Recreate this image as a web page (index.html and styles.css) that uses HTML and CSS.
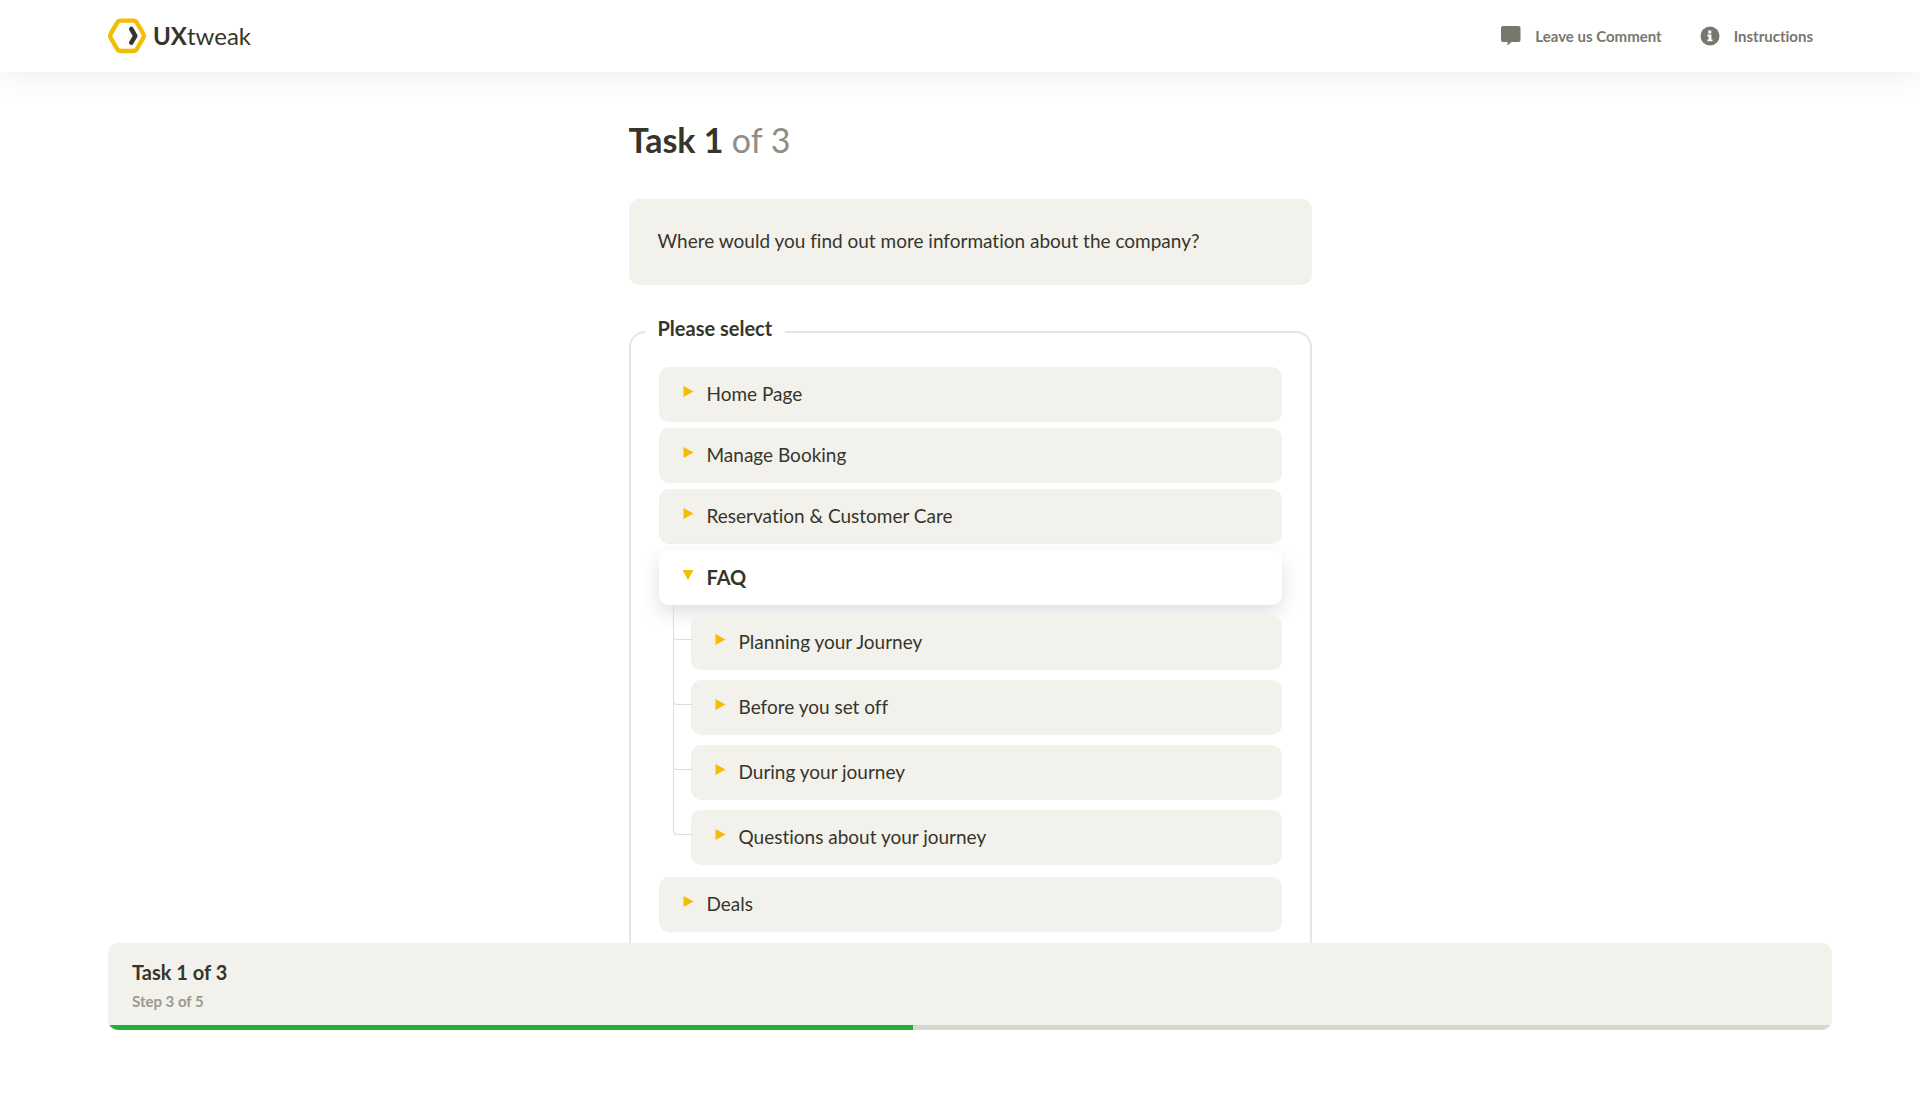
FILE: index.html
```html
<!DOCTYPE html>
<html lang="en">
  <head>
    <meta charset="UTF-8" />
    <meta name="viewport" content="width=device-width, initial-scale=1.0" />
    <title>Task 1 of 3 - UXtweak</title>

    <link rel="stylesheet" href="styles.css">
  </head>
  <body>
    <header class="header">
      <a class="logo" href="#">
        <svg width="38" height="36" viewBox="0 0 38 36" fill="none" stroke-linejoin="round" stroke-linecap="round">
          <path stroke="#f2bd05" stroke-width="4.4" d="M13 2.6h12q2.6 0 3.9 2.2l6 10.2q1.7 2.8 0 5.6l-6 10.2q-1.3 2.2-3.9 2.2H13q-2.6 0-3.9-2.2l-6-10.2q-1.7-2.8 0-5.6l6-10.2q1.3-2.2 3.9-2.2z" />
          <path stroke="#35362b" stroke-width="4.6" d="M23.3 11l4 6.8-4 6.8" />
        </svg>
        <span class="logo-text"><b>UX</b>tweak</span>
      </a>
      <nav class="nav">
        <a href="#">
          <svg width="20" height="20" viewBox="0 0 20 20" fill="currentColor">
            <path d="M2 0h15.5a2 2 0 0 1 2 2v12a2 2 0 0 1-2 2h-7L6.500 19.500V16H2a2 2 0 0 1-2-2V2a2 2 0 0 1 2-2z" />
          </svg>
          Leave us Comment
        </a>
        <a href="#">
          <svg width="20" height="20" viewBox="0 0 20 20">
            <circle cx="10" cy="10" r="9.5" fill="currentColor" />
            <path fill="#fff" d="M8.3 4.500h3v3h-3zM7.400 8.600h4v4.800h1.200v1.800H7.400v-1.800h1.200v-3H7.400z" />
          </svg>
          Instructions
        </a>
      </nav>
    </header>

    <main class="main">
      <div class="task">
        <h1>Task 1 <span>of 3</span></h1>
        <p class="question">Where would you find out more information about the company?</p>

        <fieldset class="select">
          <legend>Please select</legend>
          <ul class="tree">
            <li><button type="button" class="node">Home Page</button></li>
            <li><button type="button" class="node">Manage Booking</button></li>
            <li><button type="button" class="node">Reservation &amp; Customer Care</button></li>
            <li>
              <button type="button" class="node open" aria-expanded="true">FAQ</button>
              <ul class="subtree">
                <li><button type="button" class="node">Planning your Journey</button></li>
                <li><button type="button" class="node">Before you set off</button></li>
                <li><button type="button" class="node">During your journey</button></li>
                <li><button type="button" class="node">Questions about your journey</button></li>
              </ul>
            </li>
            <li><button type="button" class="node">Deals</button></li>
          </ul>
        </fieldset>
      </div>
    </main>

    <footer class="footer">
      <div class="status">
        <div class="status-text">
          <strong>Task 1 of 3</strong>
          <small>Step 3 of 5</small>
        </div>
        <div class="progress">
          <div class="progress-bar" style="width: 46.7%"></div>
        </div>
      </div>
    </footer>
  </body>
</html>
```
FILE: styles.css
```css
* {
  box-sizing: border-box;
}

body {
  display: flex;
  flex-direction: column;
  height: 100vh;
  margin: 0;
  color: #35362b;
  background: #fff;
  font-family: Lato, sans-serif;
  font-size: 20px;
  font-variant-ligatures: none;
  line-height: 24px;
}

ul {
  margin: 0;
  padding: 0;
  list-style: none;
}

/* Header */
.header {
  position: relative;
  z-index: 1;
  display: flex;
  align-items: center;
  justify-content: space-between;
  height: 72px;
  padding: 0 107px 0 108px;
  background: #fff;
  box-shadow: 0 4px 32px rgba(0, 0, 0, 0.07);
}

.logo {
  display: flex;
  align-items: center;
  gap: 7px;
  color: inherit;
  text-decoration: none;
}

.logo-text {
  font-size: 24px;
}

.nav {
  display: flex;
  gap: 38px;
}

.nav a {
  display: flex;
  align-items: center;
  gap: 14px;
  color: #78776d;
  font-size: 15px;
  font-weight: bold;
  text-decoration: none;
}

/* Task */
.main {
  flex: 1;
  min-height: 0;
  padding: 47px 0 0 20px;
  overflow-y: auto;
  scrollbar-width: none;
}

.task {
  max-width: 683px;
  margin: 0 auto;
}

h1 {
  margin: 0 0 38px;
  font-size: 34px;
  line-height: 42px;
}

h1 span {
  color: #8e8e86;
  font-weight: normal;
}

.question {
  margin: 0;
  padding: 30px 29px 32px;
  border-radius: 10px;
  background: #f3f1ec;
  font-size: 19px;
}

.select {
  margin: 31px 0 0;
  padding: 19px 28px 28px;
  border: 2px solid #e5e5e7;
  border-radius: 16px;
}

.select legend {
  margin-left: -14px;
  padding: 0 13px 8px;
  font-weight: bold;
}

.tree {
  display: flex;
  flex-direction: column;
  gap: 6px;
}

.node {
  display: flex;
  align-items: center;
  width: 100%;
  height: 55px;
  padding: 0 24px 2px;
  border: 0;
  border-radius: 10px;
  color: inherit;
  background: #f3f1ec;
  font: inherit;
  font-size: 19px;
  font-variant-ligatures: none;
  text-align: left;
  cursor: pointer;
}

.node::before {
  content: '';
  width: 11px;
  height: 11px;
  margin: 0 13px 4px 0;
  background: #f2bd05;
  clip-path: polygon(1px 0, 11px 50%, 1px 100%);
}

.node.open {
  position: relative;
  background: #fff;
  box-shadow: 0 8px 20px rgba(0, 0, 0, 0.13);
  font-size: 20px;
  font-weight: bold;
}

.node.open::before {
  clip-path: polygon(0 1px, 100% 1px, 50% 11px);
}

.subtree {
  display: flex;
  flex-direction: column;
  gap: 10px;
  margin: 10px 0 6px;
  padding-left: 32px;
}

.subtree li {
  position: relative;
}

/* Branch lines */
.subtree li::before {
  content: '';
  position: absolute;
  left: -18px;
  bottom: 30px;
  width: 18px;
  height: 66px;
  border: solid #dcdcde;
  border-width: 0 0 1px 1px;
  border-bottom-left-radius: 4px;
}

.subtree li:first-child::before {
  height: 35px;
}

/* Footer */
.footer {
  padding: 0 88px 67px 108px;
}

.status {
  border-radius: 10px;
  background: #f3f1ec;
  overflow: hidden;
}

.status-text {
  display: flex;
  flex-direction: column;
  gap: 7px;
  padding: 17px 24px 14px;
}

.status-text small {
  color: #9a9990;
  font-size: 15px;
  font-weight: bold;
  line-height: 20px;
}

.progress {
  height: 5px;
  background: #d8d8d2;
}

.progress-bar {
  height: 100%;
  background: #1db233;
}
```
